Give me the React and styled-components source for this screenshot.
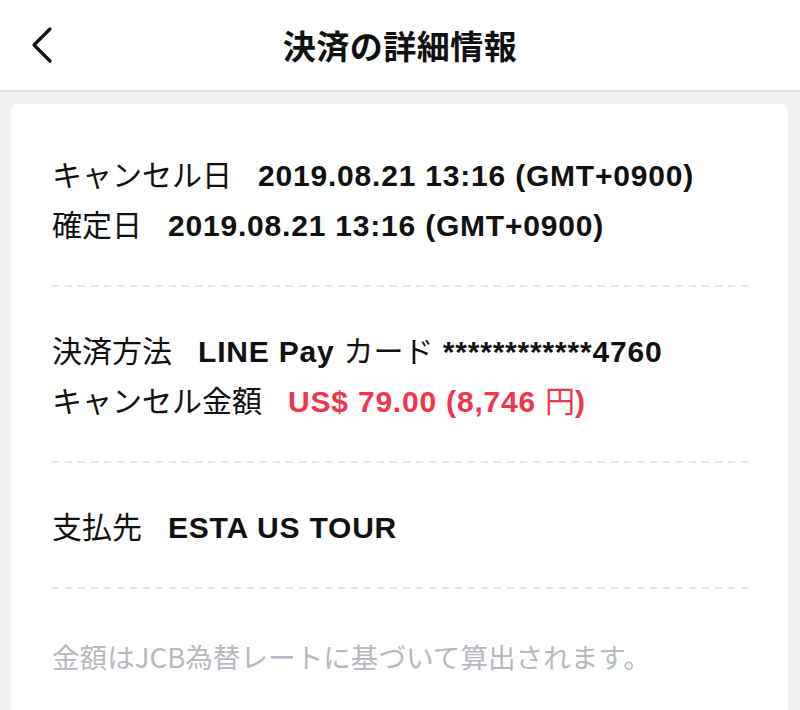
import React from "react";
import styled, { createGlobalStyle } from "styled-components";

const GlobalStyle = createGlobalStyle`
  html, body {
    margin: 0;
    padding: 0;
    background: #f1f1f1;
    overflow: hidden;
  }
  body {
    font-family: "Liberation Sans", "Noto Sans CJK JP", sans-serif;
    color: #111;
  }
`;

const Page = styled.div`
  width: 800px;
  height: 710px;
  display: flex;
  flex-direction: column;
  background: #f1f1f1;
  overflow: hidden;
`;

const Header = styled.header`
  flex: none;
  height: 90px;
  background: #fff;
  border-bottom: 2px solid #e2e2e2;
  display: grid;
  grid-template-columns: 80px 1fr 80px;
  align-items: center;
`;

const BackButton = styled.button`
  border: 0;
  background: none;
  padding: 0 0 0 30px;
  height: 100%;
  display: flex;
  align-items: center;
  cursor: pointer;
`;

const Title = styled.h1`
  margin: 0;
  text-align: center;
  font-family: "Noto Sans CJK JP", sans-serif;
  font-size: 33px;
  font-weight: 700;
  color: #111;
  letter-spacing: 0.5px;
`;

const Card = styled.main`
  flex: 1;
  margin: 12px 12px 0 11px;
  background: #fff;
  border-radius: 6px 6px 0 0;
  padding: 0 39px 0 41px;
`;

const Section = styled.section`
  padding: ${(p) => (p.$first ? "44px" : "37px")} 0 37px;
  border-bottom: 2px solid transparent;
  border-image: repeating-linear-gradient(
      to right,
      #e7e7e7 0 7px,
      transparent 7px 13px
    )
    1;
  border-image-slice: 0 0 2 0;
  border-image-width: 0 0 2px 0;
`;

const Row = styled.div`
  display: flex;
  align-items: baseline;
  height: 50px;
  line-height: 50px;
  white-space: nowrap;
`;

const Label = styled.span`
  font-family: "Noto Sans CJK JP", sans-serif;
  font-size: 30px;
  font-weight: 400;
  color: #111;
  margin-right: 26px;
`;

const Value = styled.span`
  font-family: "Liberation Sans", "Noto Sans CJK JP", sans-serif;
  font-size: 30px;
  font-weight: 700;
  letter-spacing: 0.8px;
  color: ${(p) => (p.$alert ? "#f2354b" : "#111")};
`;

const Kana = styled.span`
  font-family: "Noto Sans CJK JP", sans-serif;
  font-weight: 400;
  letter-spacing: 0;
`;

const Note = styled.p`
  margin: 0;
  padding-top: 47px;
  font-family: "Noto Sans CJK JP", sans-serif;
  font-size: 27.6px;
  color: #b6b9c1;
  white-space: nowrap;
`;

const ChevronLeft = () => (
  <svg width="24" height="38" viewBox="0 0 24 38" fill="none">
    <path
      d="M20 3 L4 19 L20 35"
      stroke="#111"
      strokeWidth="3.2"
      strokeLinecap="round"
      strokeLinejoin="round"
    />
  </svg>
);

export default function App() {
  return (
    <>
      <GlobalStyle />
      <Page>
        <Header>
          <BackButton aria-label="戻る">
            <ChevronLeft />
          </BackButton>
          <Title>決済の詳細情報</Title>
          <div />
        </Header>
        <Card>
          <Section $first>
            <Row>
              <Label>キャンセル日</Label>
              <Value>2019.08.21 13:16 (GMT+0900)</Value>
            </Row>
            <Row>
              <Label>確定日</Label>
              <Value>2019.08.21 13:16 (GMT+0900)</Value>
            </Row>
          </Section>
          <Section>
            <Row>
              <Label>決済方法</Label>
              <Value>
                LINE Pay <Kana>カード</Kana> ************4760
              </Value>
            </Row>
            <Row>
              <Label>キャンセル金額</Label>
              <Value $alert>
                US$ 79.00 (8,746 <Kana>円</Kana>)
              </Value>
            </Row>
          </Section>
          <Section>
            <Row>
              <Label>支払先</Label>
              <Value>ESTA US TOUR</Value>
            </Row>
          </Section>
          <Note>金額はJCB為替レートに基づいて算出されます。</Note>
        </Card>
      </Page>
    </>
  );
}
